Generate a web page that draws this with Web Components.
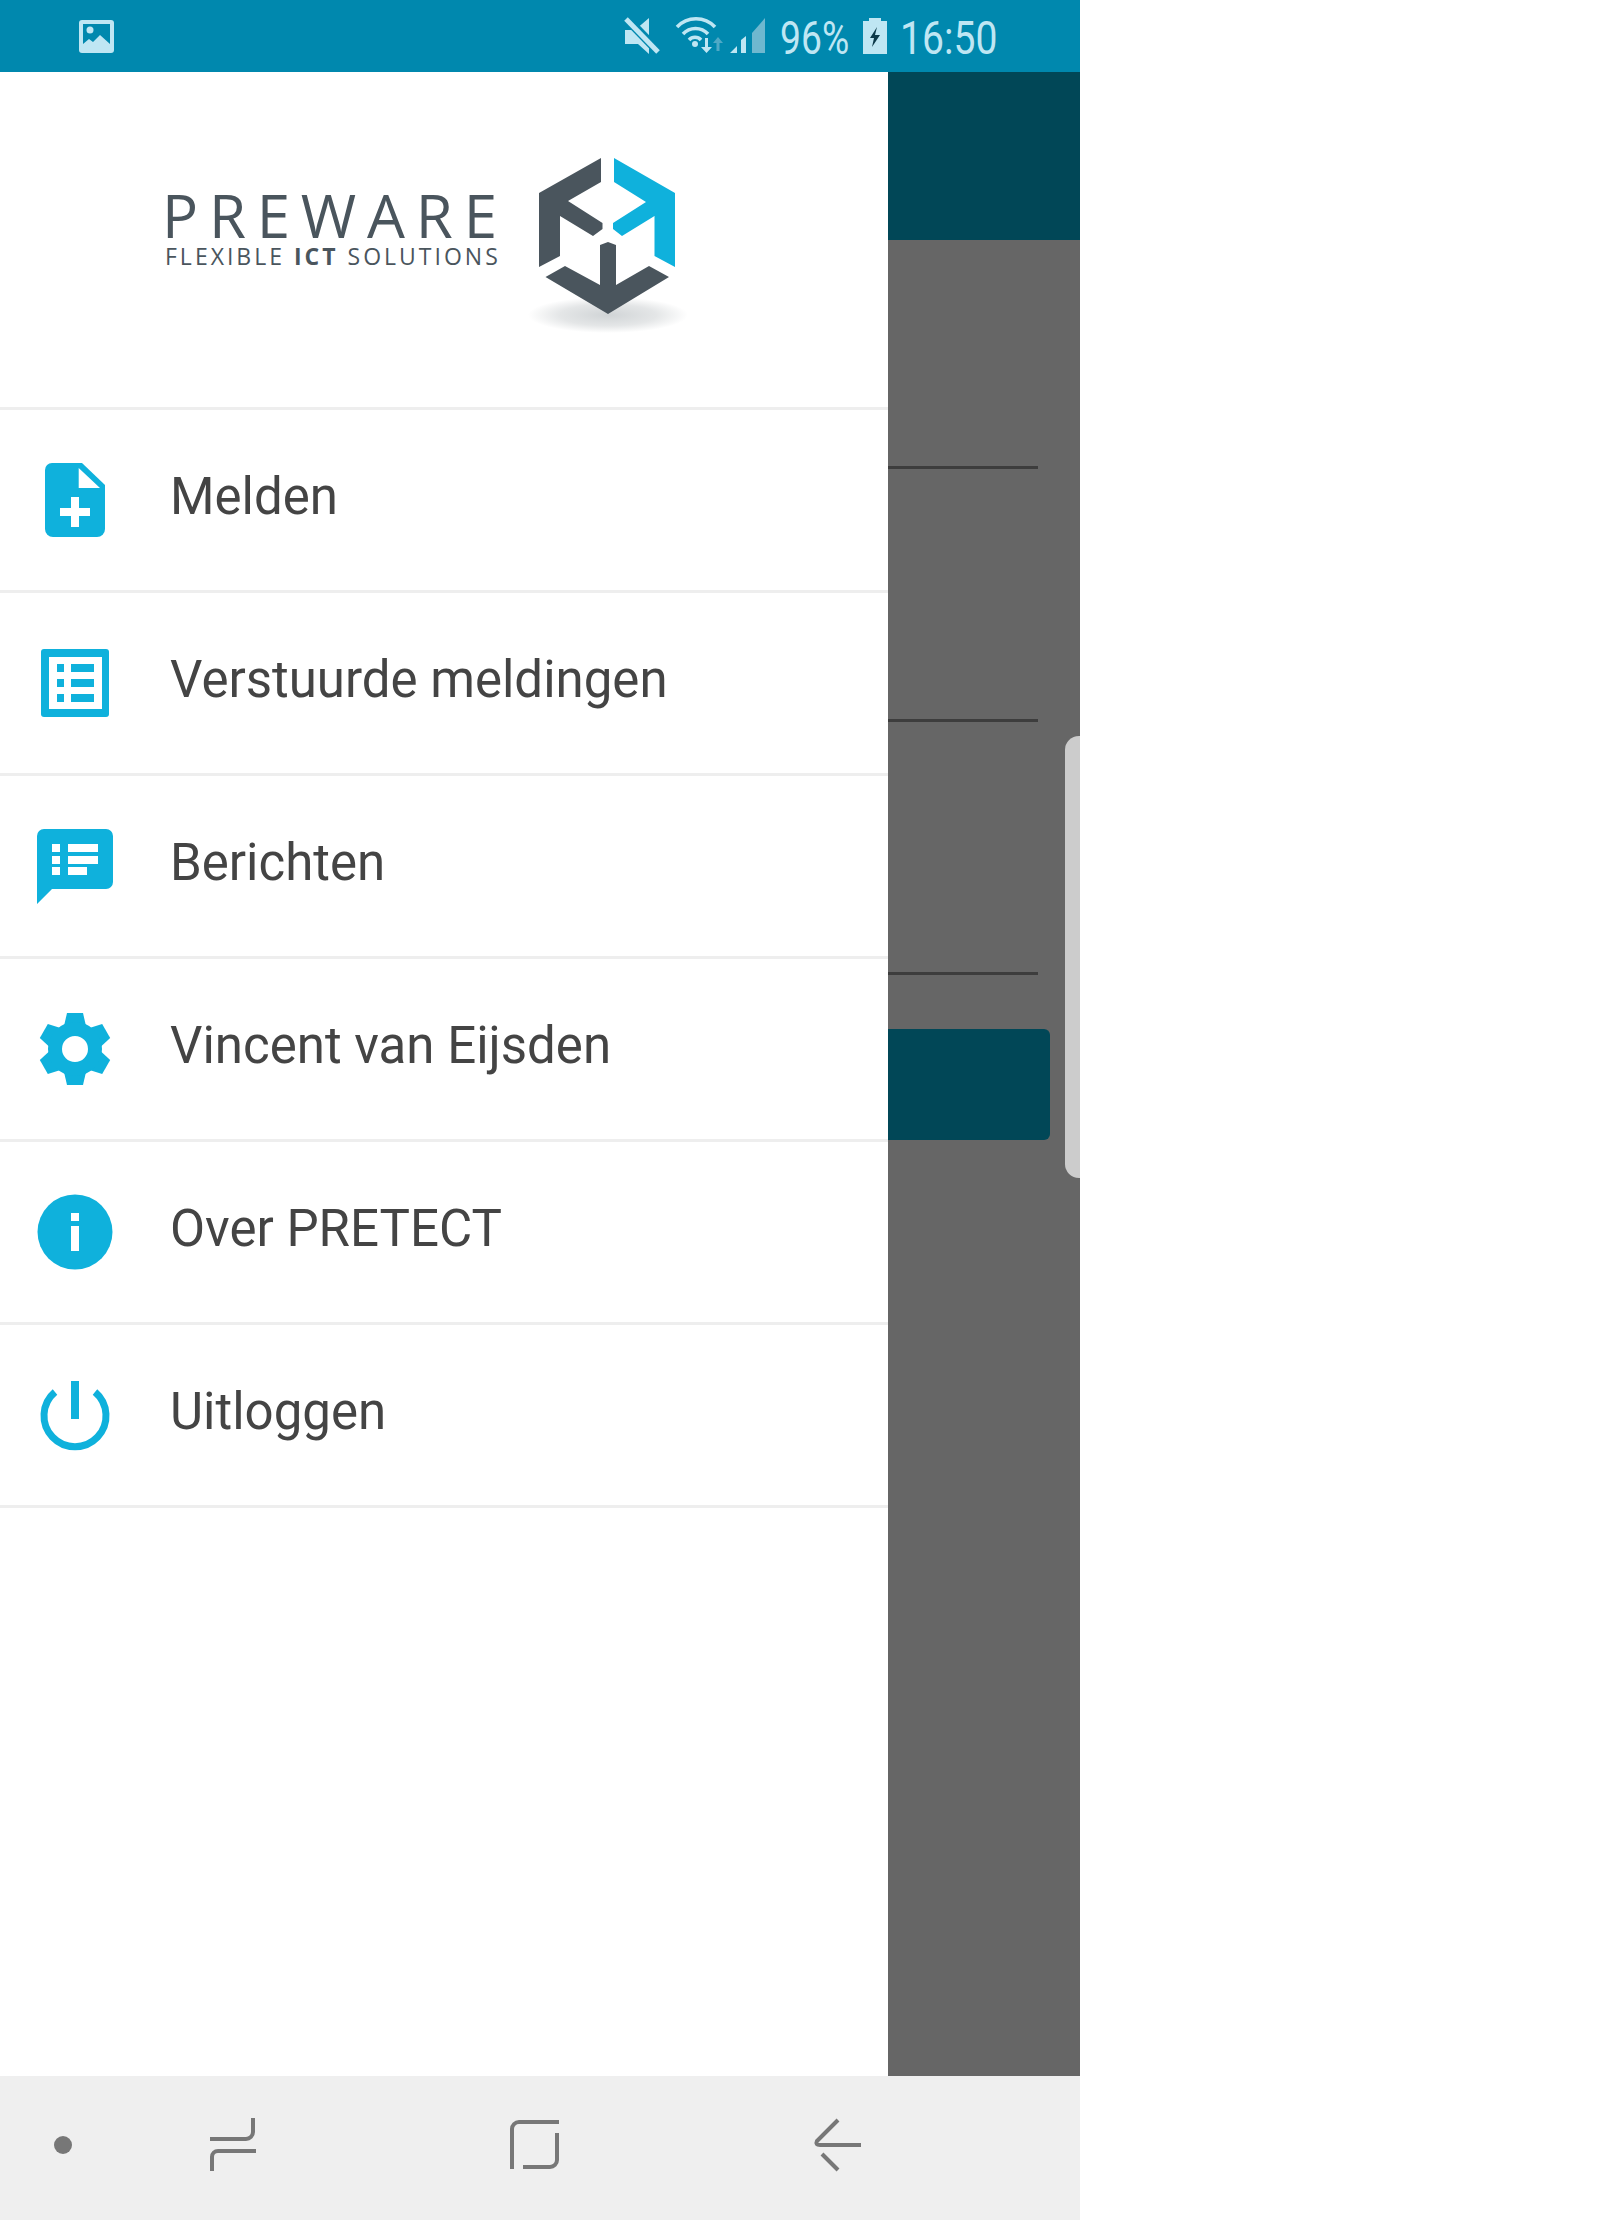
<!DOCTYPE html>
<html lang="nl">
<head>
<meta charset="utf-8">
<title>PRETECT</title>
<style>
  html, body { margin: 0; background: #fff; }
</style>
</head>
<body>
<app-shell>
  <status-bar></status-bar>
  <app-drawer>
    <preware-logo></preware-logo>
    <drawer-item>
      <svg slot="icon" width="76" height="76" viewBox="0 0 76 76"><path fill="#0fb1dc" d="M15 1h30l23 22v44a8 8 0 0 1-8 8H16a8 8 0 0 1-8-8V8a7 7 0 0 1 7-7z"/><path fill="#fff" d="M41.700 6 63 26H41.700zM34 35h8v11h11v8H42v11h-8V54H23v-8h11z"/></svg>
      Melden
    </drawer-item>
    <drawer-item>
      <svg slot="icon" width="76" height="76" viewBox="0 0 76 76"><rect x="4" y="4" width="68" height="68" rx="3" fill="#0fb1dc"/><rect x="12" y="12" width="53" height="52" fill="#fff"/><path fill="#0fb1dc" d="M20 19h7v8h-7zM34 19h23v8H34zM20 34h7v8h-7zM34 34h23v8H34zM20 49h7v8h-7zM34 49h23v8H34z"/></svg>
      Verstuurde meldingen
    </drawer-item>
    <drawer-item>
      <svg slot="icon" width="76" height="76" viewBox="0 0 76 76"><path fill="#0fb1dc" d="M7 1h62a7 7 0 0 1 7 7v46a7 7 0 0 1-7 7H15L0 76V8a7 7 0 0 1 7-7z"/><path fill="#fff" d="M15 16h8v8h-8zM31 16h30v8H31zM15 28h8v8h-8zM31 28h30v8H31zM15 39h8v8h-8zM31 39h19v8H31z"/></svg>
      Berichten
    </drawer-item>
    <drawer-item>
      <svg slot="icon" width="76" height="76" viewBox="0 0 76 76"><g fill="#0fb1dc"><polygon points="30,2 46,2 49,15 27,15"/><polygon points="30,2 46,2 49,15 27,15" transform="rotate(60 38 38)"/><polygon points="30,2 46,2 49,15 27,15" transform="rotate(120 38 38)"/><polygon points="30,2 46,2 49,15 27,15" transform="rotate(180 38 38)"/><polygon points="30,2 46,2 49,15 27,15" transform="rotate(240 38 38)"/><polygon points="30,2 46,2 49,15 27,15" transform="rotate(300 38 38)"/></g><circle cx="38" cy="38" r="20" fill="none" stroke="#0fb1dc" stroke-width="14"/></svg>
      Vincent van Eijsden
    </drawer-item>
    <drawer-item>
      <svg slot="icon" width="76" height="76" viewBox="0 0 76 76"><circle cx="38" cy="38" r="37.500" fill="#0fb1dc"/><path fill="#fff" d="M34 19h8v8h-8zM34 32h8v25h-8z"/></svg>
      Over PRETECT
    </drawer-item>
    <drawer-item>
      <svg slot="icon" width="76" height="76" viewBox="0 0 76 76"><path d="M18 15A31 31 0 1 0 58 15" fill="none" stroke="#0fb1dc" stroke-width="7"/><rect x="34" y="4" width="8" height="38" fill="#0fb1dc"/></svg>
      Uitloggen
    </drawer-item>
  </app-drawer>
  <nav-bar></nav-bar>
</app-shell>

<script>
class AppShell extends HTMLElement {
  constructor() {
    super();
    this.attachShadow({ mode: 'open' });
  }

  connectedCallback() {
    this.shadowRoot.innerHTML = `
    <style>
      :host {
        display: flex;
        flex-direction: column;
        width: 1080px;
        height: 2220px;
        font-family: 'Roboto', 'Liberation Sans', sans-serif;
      }
    </style>
    <slot></slot>
    `;
  }
}

class StatusBar extends HTMLElement {
  constructor() {
    super();
    this.attachShadow({ mode: 'open' });
  }

  connectedCallback() {
    this.shadowRoot.innerHTML = `
    <style>
      :host {
        display: flex;
        align-items: center;
        flex: none;
        height: 72px;
        padding: 0 83px 0 79px;
        background: #0088ae;
        color: #bfe6f3;
        font: 400 46px 'Roboto', sans-serif;
      }
      .cluster { margin-left: auto; display: block; }
      .pct, .time {
        display: inline-block;
        white-space: nowrap;
        transform-origin: left center;
        padding-top: 4px;
      }
      .pct { width: 70px; margin-left: 10px; transform: scaleX(.81); }
      .batt { margin-left: 13px; display: block; }
      .time { width: 97px; margin-left: 13px; transform: scaleX(.85); }
    </style>
    <svg width="35" height="72" viewBox="79 0 35 72">
      <rect x="79" y="20" width="35" height="33" rx="3" fill="#bfe6f3"/>
      <rect x="83" y="24" width="27" height="25" fill="#0088ae"/>
      <circle cx="90" cy="30" r="3.500" fill="#bfe6f3"/>
      <path fill="#bfe6f3" d="M83 44l6-5 4 3 7-7 10 9v5H83z"/>
    </svg>
    <svg class="cluster" width="150" height="72" viewBox="620 0 150 72">
      <path fill="#bfe6f3" d="M625 30h10l14-12v36l-11-10h-13z"/>
      <path d="M626 18l32 33" stroke="#0088ae" stroke-width="9" fill="none"/>
      <path d="M626 19l32 33" stroke="#bfe6f3" stroke-width="5" fill="none"/>
      <g fill="none" stroke="#bfe6f3" stroke-width="3.500">
        <path d="M677 27a26 26 0 0 1 38 0"/>
        <path d="M683 34a17 17 0 0 1 25 0"/>
        <path d="M689 40a8 8 0 0 1 12 0"/>
      </g>
      <circle cx="695" cy="44" r="3" fill="#bfe6f3"/>
      <path fill="#bfe6f3" d="M705 38h3v9h4l-5.500 6-5.500-6h4z"/>
      <path fill="#4fa9c6" d="M716.500 41h3v10h-3zM718 37l5 6h-10z"/>
      <path fill="#bfe6f3" d="M730 53l7-7v7zM741 40l5-4v17h-5z"/>
      <path fill="#6fb8cf" d="M752 33l13-15v35h-13z"/>
    </svg>
    <span class="pct">96%</span>
    <svg class="batt" width="24" height="36" viewBox="863 19 24 36">
      <path fill="#bfe6f3" d="M869 19h12v3h6v33h-24V22h6z"/>
      <path fill="#0d3a4a" d="M877 28l-7 11h4l-2 9 8-12h-5z"/>
    </svg>
    <span class="time">16:50</span>
    `;
  }
}

class AppDrawer extends HTMLElement {
  constructor() {
    super();
    this.attachShadow({ mode: 'open' });
  }

  connectedCallback() {
    this.shadowRoot.innerHTML = `
    <style>
      :host {
        display: flex;
        flex: 1;
        min-height: 0;
        position: relative;
        background: #666;
      }
      .panel {
        width: 888px;
        flex: none;
        display: flex;
        flex-direction: column;
        background: #fff;
      }
      .behind { flex: 1; min-width: 0; }
      .head { height: 168px; background: #014757; }
      .line { height: 3px; width: 150px; background: #3d3d3d; }
      .line.a { margin-top: 226px; }
      .line.b { margin-top: 250px; }
      .btn {
        margin-top: 54px;
        width: 162px;
        height: 111px;
        background: #014757;
        border-radius: 0 6px 6px 0;
      }
      .handle {
        position: absolute;
        right: 0;
        top: 664px;
        width: 15px;
        height: 442px;
        background: #ccc;
        border-radius: 14px 0 0 14px;
      }
    </style>
    <div class="panel"><slot></slot></div>
    <div class="behind">
      <div class="head"></div>
      <div class="line a"></div>
      <div class="line b"></div>
      <div class="line b"></div>
      <div class="btn"></div>
    </div>
    <div class="handle"></div>
    `;
  }
}

class PrewareLogo extends HTMLElement {
  constructor() {
    super();
    this.attachShadow({ mode: 'open' });
  }

  connectedCallback() {
    this.shadowRoot.innerHTML = `
    <style>
      :host {
        display: flex;
        align-items: flex-start;
        flex: none;
        height: 335px;
        padding-left: 165px;
        border-bottom: 3px solid #eee;
        color: #4a555d;
        font-family: 'Open Sans', sans-serif;
      }
      .words { width: 333px; margin-top: 113px; flex: none; white-space: nowrap; }
      .name { font-size: 60px; font-weight: 400; line-height: 60px; letter-spacing: 10.8px; margin-left: -3px; }
      .tag { font-size: 23px; line-height: 26px; letter-spacing: 3px; margin-top: -2px; }
      .tag b { font-weight: 700; }
      svg { margin: 78px 0 0 22px; flex: none; }
    </style>
    <div class="words">
      <div class="name">PREWARE</div>
      <div class="tag">FLEXIBLE <b>ICT</b> SOLUTIONS</div>
    </div>
    <svg width="180" height="190" viewBox="520 150 180 190">
      <defs>
        <radialGradient id="sh">
          <stop offset="0" stop-color="#d0d4d6"/>
          <stop offset=".6" stop-color="#e4e6e7"/>
          <stop offset="1" stop-color="#fff"/>
        </radialGradient>
      </defs>
      <ellipse cx="608" cy="315" rx="80" ry="18" fill="url(#sh)"/>
      <path fill="#4a555d" d="M601 158L539 193V267L560 256V216L593 236L602.500 229V223L568 201L601 182z"/>
      <path fill="#0fb1dc" d="M614 158L675 193V267L654.500 256V216L622 236L613 229V223L646 202L614 182z"/>
      <path fill="#4a555d" d="M565 266L545.500 277L608 314L669 277L649 266L616 285V245L608 242L600 245V285z"/>
    </svg>
    `;
  }
}

class DrawerItem extends HTMLElement {
  constructor() {
    super();
    this.attachShadow({ mode: 'open' });
  }

  connectedCallback() {
    this.shadowRoot.innerHTML = `
    <style>
      :host {
        display: flex;
        align-items: center;
        flex: none;
        height: 180px;
        padding-left: 37px;
        border-bottom: 3px solid #eee;
        color: #444;
        font: 400 51px 'Roboto', sans-serif;
      }
      .icon { display: flex; width: 76px; height: 76px; flex: none; }
      .label { margin-left: 57px; padding-bottom: 8px; white-space: nowrap; }
    </style>
    <span class="icon"><slot name="icon"></slot></span>
    <span class="label"><slot></slot></span>
    `;
  }
}

class NavBar extends HTMLElement {
  constructor() {
    super();
    this.attachShadow({ mode: 'open' });
  }

  connectedCallback() {
    this.shadowRoot.innerHTML = `
    <style>
      :host {
        display: flex;
        align-items: center;
        flex: none;
        height: 144px;
        padding-left: 54px;
        background: #efefef;
      }
      svg { display: block; flex: none; }
      g { fill: none; stroke: #777; stroke-width: 4; }
    </style>
    <svg width="18" height="60" viewBox="54 2118 18 60"><circle cx="63" cy="2145" r="9" fill="#777"/></svg>
    <svg style="margin-left:136px" width="50" height="60" viewBox="208 2118 50 60"><g>
      <path d="M253 2118v14a7 7 0 0 1-7 7h-36"/>
      <path d="M256 2151h-38a6 6 0 0 0-6 6v14"/>
    </g></svg>
    <svg style="margin-left:251px" width="52" height="60" viewBox="509 2118 52 60"><g>
      <path d="M512 2169v-40a7 7 0 0 1 7-7h40"/>
      <path d="M557 2133v27a7 7 0 0 1-7 7h-27"/>
    </g></svg>
    <svg style="margin-left:252px" width="50" height="60" viewBox="813 2118 50 60"><g>
      <path d="M838 2120l-21 21q-2 4 3 4h41"/>
      <path d="M822 2154l16 16"/>
    </g></svg>
    `;
  }
}

customElements.define('app-shell', AppShell);
customElements.define('status-bar', StatusBar);
customElements.define('app-drawer', AppDrawer);
customElements.define('preware-logo', PrewareLogo);
customElements.define('drawer-item', DrawerItem);
customElements.define('nav-bar', NavBar);
</script>
</body>
</html>
